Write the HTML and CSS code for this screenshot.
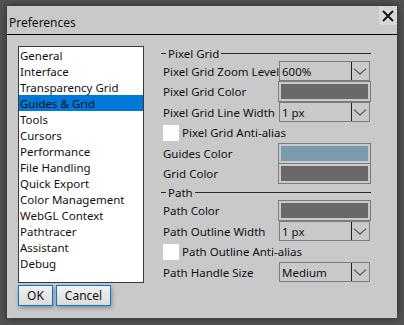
FILE: index.html
```html
<!DOCTYPE html>
<html lang="en">
  <head>
    <meta charset="UTF-8" />
    <title>Preferences</title>
    <link rel="stylesheet" href="styles.css">
  </head>
  <body>
    <div class="dialog">
      <div class="titlebar">
        <span class="title">Preferences</span>
        <button class="close" title="Close">
          <svg width="12" height="12" viewBox="0 0 12 12">
            <path d="M1 1 L11 11 M11 1 L1 11" stroke="#111" stroke-width="1.8" fill="none" />
          </svg>
        </button>
      </div>
      <div class="content">
        <div class="side">
          <ul class="list">
            <li>General</li>
            <li>Interface</li>
            <li>Transparency Grid</li>
            <li class="selected">Guides &amp; Grid</li>
            <li>Tools</li>
            <li>Cursors</li>
            <li>Performance</li>
            <li>File Handling</li>
            <li>Quick Export</li>
            <li>Color Management</li>
            <li>WebGL Context</li>
            <li>Pathtracer</li>
            <li>Assistant</li>
            <li>Debug</li>
          </ul>
          <div class="actions">
            <button class="btn ok">OK</button>
            <button class="btn cancel">Cancel</button>
          </div>
        </div>

        <div class="settings">
          <div class="legend"><span>Pixel Grid</span></div>
          <div class="row">
            <label>Pixel Grid Zoom Level</label>
            <div class="select"><span>600%</span><i class="arrow"></i></div>
          </div>
          <div class="row">
            <label>Pixel Grid Color</label>
            <div class="swatch"><div class="fill grey"></div></div>
          </div>
          <div class="row">
            <label>Pixel Grid Line Width</label>
            <div class="select"><span>1 px</span><i class="arrow"></i></div>
          </div>
          <div class="row check">
            <span class="box"></span>
            <label>Pixel Grid Anti-alias</label>
          </div>
          <div class="row">
            <label>Guides Color</label>
            <div class="swatch"><div class="fill blue"></div></div>
          </div>
          <div class="row">
            <label>Grid Color</label>
            <div class="swatch"><div class="fill grey"></div></div>
          </div>

          <div class="legend"><span>Path</span></div>
          <div class="row">
            <label>Path Color</label>
            <div class="swatch"><div class="fill grey"></div></div>
          </div>
          <div class="row">
            <label>Path Outline Width</label>
            <div class="select"><span>1 px</span><i class="arrow"></i></div>
          </div>
          <div class="row check">
            <span class="box"></span>
            <label>Path Outline Anti-alias</label>
          </div>
          <div class="row">
            <label>Path Handle Size</label>
            <div class="select"><span>Medium</span><i class="arrow"></i></div>
          </div>
        </div>
      </div>
    </div>
  </body>
</html>
```

FILE: styles.css
```css
body {
  margin: 0;
  background: #535353;
  font-family: "Noto Sans", sans-serif;
  font-size: 11.5px;
  color: #111;
  width: 404px;
  height: 325px;
  overflow: hidden;
}
.dialog {
  margin: 6px 0 0 7px;
  width: 390px;
  height: 312px;
  background: #c9c9c9;
  box-shadow: 0 0 8px rgba(0, 0, 0, 0.55);
}
.titlebar {
  display: flex;
  height: 28px;
  border-bottom: 1px solid #000;
}
.title {
  padding: 9px 0 0 2px;
  line-height: 16px;
  font-size: 12px;
}
.close {
  margin-left: auto;
  width: 18px;
  height: 19px;
  padding: 0;
  border: none;
  background: #d7d7d7;
  display: flex;
  align-items: center;
  justify-content: center;
}
.content {
  display: flex;
  padding: 11px 0 0 11px;
}
.side {
  width: 126px;
}
.list {
  list-style: none;
  margin: 0;
  padding: 0;
  height: 235px;
  background: #fff;
  border: 1px solid #3a3a3a;
}
.list li {
  height: 16px;
  line-height: 17px;
  padding-left: 1px;
}
.list .selected {
  background: #0078d7;
}
.actions {
  display: flex;
  gap: 3px;
  margin-top: 2px;
}
.btn {
  height: 21px;
  padding: 0;
  font-family: inherit;
  font-size: 12px;
  color: #111;
  border: 1px solid #0078d7;
  background: linear-gradient(#f2f2f2, #dcdcdc);
  box-shadow: 1px 2px 4px rgba(0, 0, 0, 0.3);
}
.ok {
  width: 35px;
}
.cancel {
  width: 55px;
}
.settings {
  width: 210px;
  margin: -1px 0 0 17px;
}
.legend {
  display: flex;
  align-items: center;
  gap: 2px;
  height: 16px;
}
.legend::before {
  content: "";
  width: 5px;
  border-top: 1px solid #2a2a2a;
}
.legend::after {
  content: "";
  flex: 1;
  border-top: 1px solid #2a2a2a;
}
.row {
  display: flex;
  align-items: center;
  height: 20px;
  margin-bottom: 0.6px;
  padding-left: 2px;
}
.row label {
  width: 116px;
  white-space: nowrap;
  overflow: hidden;
}
.select {
  display: flex;
  align-items: center;
  width: 89px;
  height: 18px;
  border: 1px solid #7c7c7c;
}
.select span {
  flex: 1;
  padding-left: 2px;
}
.arrow {
  width: 17px;
  height: 18px;
  border-left: 1px solid #1e1e1e;
  position: relative;
}
.arrow::after {
  content: "";
  position: absolute;
  left: 4px;
  top: 3px;
  width: 7px;
  height: 7px;
  border-right: 1px solid #555;
  border-bottom: 1px solid #555;
  transform: scaleX(1.15) rotate(45deg);
}
.swatch {
  width: 87px;
  height: 15px;
  padding: 2px;
  border: 1px solid #7c7c7c;
}
.fill {
  height: 100%;
}
.grey {
  background: #696969;
}
.blue {
  background: #7b9aab;
}
.check .box {
  width: 16px;
  height: 16px;
  background: #fff;
  margin-right: 3px;
}
.check label {
  width: auto;
}
```
